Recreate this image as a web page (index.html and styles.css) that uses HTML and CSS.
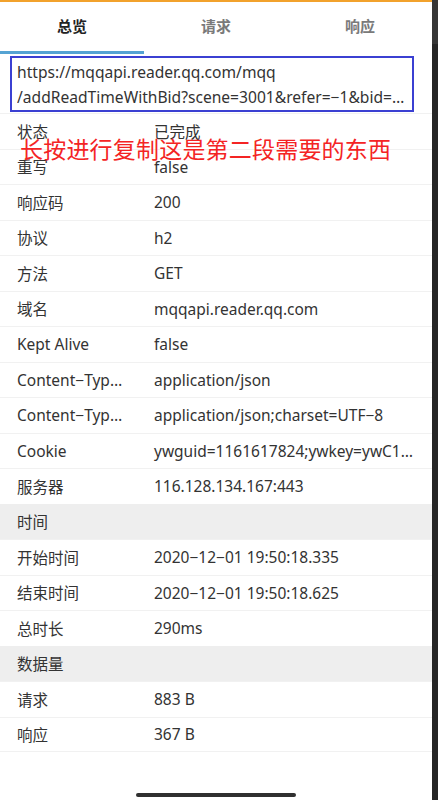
FILE: index.html
```html
<!DOCTYPE html>
<html lang="zh">
<head>
<meta charset="utf-8">
<link rel="stylesheet" href="styles.css">
</head>
<body>
<div class="screen">
  <main class="panel">
    <div class="topline"></div>
    <nav class="tabs">
      <div class="tab active">总览</div>
      <div class="tab">请求</div>
      <div class="tab">响应</div>
    </nav>
    <div class="url-box">
      <span class="url-line">https://mqqapi.reader.qq.com/mqq</span>
      <span class="url-line">/addReadTimeWithBid?scene=3001&amp;refer=−1&amp;bid=…</span>
    </div>
    <div class="list">
      <div class="row"><span class="k">状态</span><span class="v">已完成</span></div>
      <div class="row"><span class="k">重写</span><span class="v">false</span></div>
      <div class="row"><span class="k">响应码</span><span class="v">200</span></div>
      <div class="row"><span class="k">协议</span><span class="v">h2</span></div>
      <div class="row"><span class="k">方法</span><span class="v">GET</span></div>
      <div class="row"><span class="k">域名</span><span class="v">mqqapi.reader.qq.com</span></div>
      <div class="row"><span class="k">Kept Alive</span><span class="v">false</span></div>
      <div class="row"><span class="k">Content−Typ…</span><span class="v">application/json</span></div>
      <div class="row"><span class="k">Content−Typ…</span><span class="v">application/json;charset=UTF−8</span></div>
      <div class="row"><span class="k">Cookie</span><span class="v">ywguid=1161617824;ywkey=ywC1…</span></div>
      <div class="row"><span class="k">服务器</span><span class="v">116.128.134.167:443</span></div>
      <div class="row section"><span class="k">时间</span></div>
      <div class="row"><span class="k">开始时间</span><span class="v">2020−12−01 19:50:18.335</span></div>
      <div class="row"><span class="k">结束时间</span><span class="v">2020−12−01 19:50:18.625</span></div>
      <div class="row"><span class="k">总时长</span><span class="v">290ms</span></div>
      <div class="row section"><span class="k">数据量</span></div>
      <div class="row"><span class="k">请求</span><span class="v">883 B</span></div>
      <div class="row"><span class="k">响应</span><span class="v">367 B</span></div>
    </div>
    <div class="note">长按进行复制这是第二段需要的东西</div>
    <div class="home-bar"></div>
  </main>
  <aside class="edge"><div class="edge-top"></div></aside>
</div>
</body>
</html>
```

FILE: styles.css
```css
* { box-sizing: border-box; }
html, body { margin: 0; padding: 0; }
body {
  width: 438px;
  height: 800px;
  overflow: hidden;
  background: #fff;
  font-family: "Noto Sans", "Noto Sans CJK SC", sans-serif;
  color: #333;
}
.screen {
  display: flex;
  height: 800px;
}
.panel {
  position: relative;
  width: 432px;
  height: 800px;
  background: #fff;
}
.edge {
  width: 6px;
  background: #262626;
  display: flex;
  flex-direction: column;
}
.edge-top {
  height: 44px;
  background: #363636;
}
.topline {
  height: 2px;
  background: #f2a22c;
}
.tabs {
  display: flex;
  height: 52px;
}
.tab {
  width: 144px;
  display: flex;
  align-items: center;
  justify-content: center;
  font-family: "Noto Sans CJK SC", sans-serif;
  font-size: 15px;
  font-weight: 700;
  color: #7a7a7a;
  padding-bottom: 2px;
  border-bottom: 3px solid transparent;
}
.tab.active {
  color: #222;
  border-bottom-color: #55a3d3;
}
.url-box {
  margin: 2px 18px 0 10px;
  height: 56px;
  border: 2px solid #3b40d2;
  padding: 2px 5px 0 5px;
  display: flex;
  flex-direction: column;
  font-size: 15.6px;
  line-height: 25px;
  color: #333;
}
.url-line {
  display: block;
  white-space: nowrap;
  overflow: hidden;
}
.list {
  display: flex;
  flex-direction: column;
  margin-top: 1px;
}
.row {
  height: 35.5px;
  display: flex;
  align-items: center;
  padding-left: 17px;
  border-top: 1px solid #f1f1f1;
  font-size: 15.5px;
  color: #333;
}
.row:last-child {
  border-bottom: 1px solid #f1f1f1;
}
.row.section {
  background: #eeeeee;
  border-top-color: #eeeeee;
}
.k {
  width: 137px;
  flex: none;
  white-space: nowrap;
}
.v {
  white-space: nowrap;
}
.note {
  position: absolute;
  left: 20px;
  top: 134px;
  font-family: "Noto Sans CJK SC", sans-serif;
  font-size: 23px;
  line-height: 28px;
  color: #f42424;
  letter-spacing: 0.2px;
}
.home-bar {
  position: absolute;
  left: 136px;
  top: 793px;
  width: 160px;
  height: 4px;
  border-radius: 2px;
  background: #303030;
}
```
